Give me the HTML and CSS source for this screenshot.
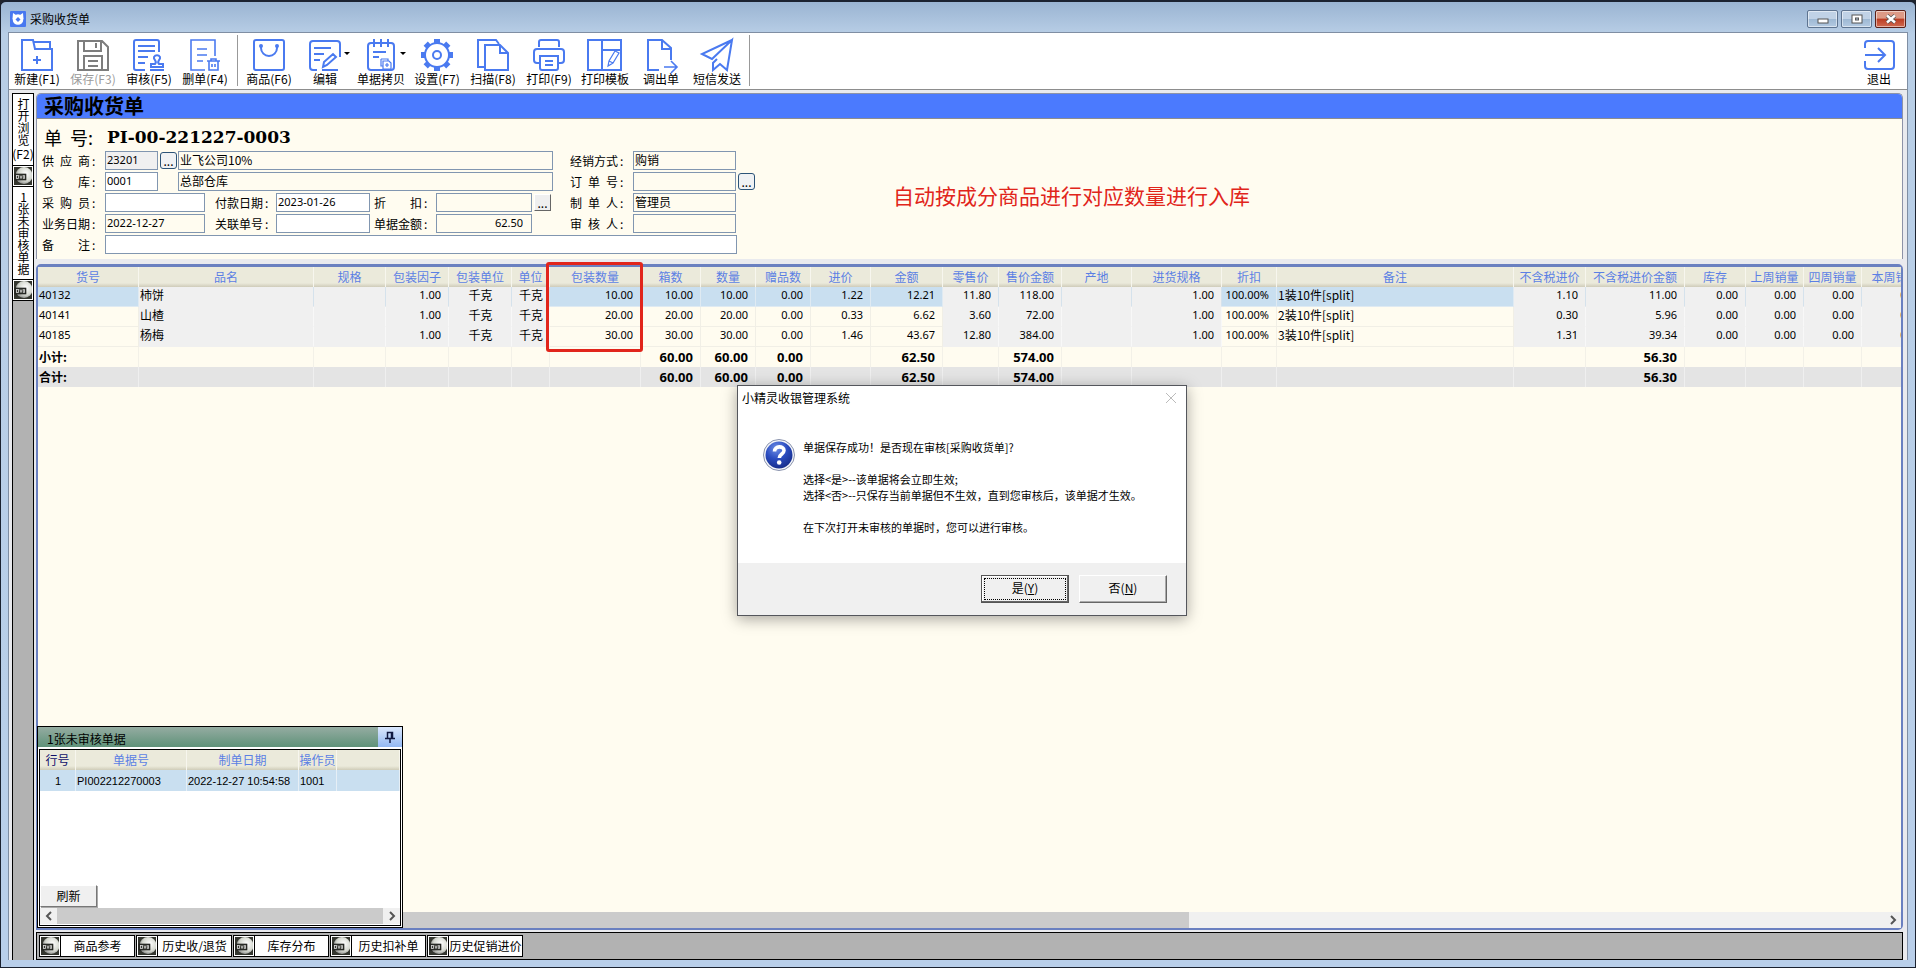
FILE: index.html
```html
<!DOCTYPE html>
<html lang="zh-CN">
<head>
<meta charset="utf-8">
<title>采购收货单</title>
<link rel="stylesheet" href="styles.css">
</head>
<body>
<svg class="defs" aria-hidden="true">
  <defs>
    <radialGradient id="disc" cx=".6" cy=".4" r=".7"><stop offset="0" stop-color="#fff"/><stop offset=".6" stop-color="#d5d8d0"/><stop offset="1" stop-color="#777"/></radialGradient>
    <radialGradient id="ball" cx=".4" cy=".25" r=".8"><stop offset="0" stop-color="#6f8fe6"/><stop offset=".5" stop-color="#2a4cc0"/><stop offset="1" stop-color="#142a86"/></radialGradient>
    <symbol id="dvd" viewBox="0 0 18 18">
      <rect width="18" height="18" fill="#34362f"/>
      <circle cx="10" cy="8.500" r="8.500" fill="url(#disc)"/>
      <rect x="1" y="7" width="11" height="6" fill="#33352f" stroke="#111" stroke-width=".6"/>
      <rect x="2.500" y="8.500" width="2" height="3" fill="none" stroke="#ddd" stroke-width=".8"/>
      <path d="M6 8.500l1 3 1-3M9.300 8.500v3h1.200v-3z" fill="none" stroke="#ddd" stroke-width=".8"/>
    </symbol>
  </defs>
</svg>
<div class="window">
  <header class="titlebar">
    <svg class="app-icon" viewBox="0 0 16 16"><rect width="16" height="16" rx="1" fill="#4878f0"/><path d="M3 2l3 2h4l3-2 .5 6h-11z" fill="#fff"/><circle cx="8" cy="8.500" r="5.300" fill="#fff"/><path d="M8 6l2.500 2.500L8 11 5.500 8.500z" fill="#4878f0"/></svg>
    <span class="caption">采购收货单</span>
    <div class="win-buttons">
      <button class="win-btn" aria-label="最小化"><svg viewBox="0 0 12 10"><rect x="1" y="5" width="10" height="4" fill="#fff" stroke="#555"/></svg></button>
      <button class="win-btn" aria-label="还原"><svg viewBox="0 0 12 10"><rect x="1" y="1" width="10" height="8" fill="#fff" stroke="#555"/><rect x="4.500" y="4" width="3" height="2" fill="#b5cae0" stroke="#555"/></svg></button>
      <button class="win-btn close" aria-label="关闭"><svg viewBox="0 0 12 10"><path d="M2 1.500l8 7M10 1.500l-8 7" stroke="#555" stroke-width="4"/><path d="M2 1.500l8 7M10 1.500l-8 7" stroke="#fff" stroke-width="2.400"/></svg></button>
    </div>
  </header>

  <div class="client">
    <nav class="toolbar">
      <button class="tool"><svg viewBox="0 0 32 32"><path d="M1 31V1h11l2 9h17v21zM12 3h17v7M16 17v8M12 21h8"/></svg>新建(F1)</button>
      <button class="tool" disabled><svg viewBox="0 0 32 32"><path d="M1 2h24l6 6v23H1zM7 2v10h17V2M19 4v5M7 31V17h18v14M11 22h10M11 27h10"/></svg>保存(F3)</button>
      <button class="tool"><svg viewBox="0 0 32 32"><path d="M26 13V3a2 2 0 0 0-2-2H3a2 2 0 0 0-2 2v26a2 2 0 0 0 2 2h9M5 7h17M5 12h17M5 18h10M5 24h7M22 25c3-3-2-4-1-7a3.500 3.500 0 0 1 6 0c1 3-4 4-1 7h4v3H18v-3zM17 31h14"/></svg>审核(F5)</button>
      <button class="tool"><svg class="thin" viewBox="0 0 32 32"><path d="M26 17V1H2v30h14M8 10h10M8 16h10M8 22h6M18 22h13M22 22v-2h5v2M20 22v9h9v-9M23 25v3M26 25v3"/></svg>删单(F4)</button>
      <span class="tool-sep"></span>
      <button class="tool"><svg viewBox="0 0 32 32"><rect x="1" y="1" width="30" height="30" rx="2"/><path d="M8 7v2a8 8 0 0 0 16 0V7"/><circle cx="8" cy="7" r="1"/><circle cx="24" cy="7" r="1"/></svg>商品(F6)</button>
      <button class="tool"><svg viewBox="0 0 32 32"><path d="M31 18V5a3 3 0 0 0-3-3H4a3 3 0 0 0-3 3v23a3 3 0 0 0 3 3h4M5 9h17M5 15h10M5 21h6M14 28l1-5 9-8 3 3-9 8zM13 31h16"/></svg><i class="caret"></i>编辑</button>
      <button class="tool"><svg viewBox="0 0 32 32"><path d="M13 31H6a3 3 0 0 1-3-3V7a3 3 0 0 1 3-3h20a3 3 0 0 1 3 3v21a3 3 0 0 1-3 3H13M9 0v8M16 0v8M23 0v8M8 13h13M8 18h6"/><path class="hair" d="M16 20h7v2M16 20v7h2M18 22h6l2 2v6h-8zM22 24v4M20 26h4"/></svg><i class="caret"></i>单据拷贝</button>
      <button class="tool"><svg viewBox="0 0 32 32"><circle cx="16" cy="16" r="12"/><circle cx="16" cy="16" r="4"/><g class="teeth"><path d="M16 0v4M16 28v4M0 16h4M28 16h4M4.700 4.700l2.800 2.800M24.500 24.500l2.800 2.800M27.300 4.700l-2.800 2.800M7.500 24.500l-2.800 2.800"/></g></svg>设置(F7)</button>
      <button class="tool"><svg viewBox="0 0 32 32"><path d="M9 28H1V1h18l3 4M8 6h15l8 8v17H8zM23 6v8h8"/></svg>扫描(F8)</button>
      <button class="tool"><svg viewBox="0 0 32 32"><path d="M6 8V3a2 2 0 0 1 2-2h16a2 2 0 0 1 2 2v5M7 24H4a3 3 0 0 1-3-3V13a3 3 0 0 1 3-3h24a3 3 0 0 1 3 3v8a3 3 0 0 1-3 3h-3M7 17h18v12a2 2 0 0 1-2 2H9a2 2 0 0 1-2-2zM12 22h8M12 26h8"/></svg>打印(F9)</button>
      <button class="tool"><svg viewBox="0 0 32 32"><path d="M-1 1h33v30H-1zM13 1v30M13 11h19"/><path class="hair" d="M19 27l1-5 6-10 4 2-6 10zM20 22l4 2"/></svg>打印模板</button>
      <button class="tool"><svg viewBox="0 0 32 32"><path d="M14 31H3V1h14l9 8v12M17 1v9h9"/><path class="thin" d="M19 28h13M26 22l6 6-6 6"/></svg>调出单</button>
      <button class="tool"><svg viewBox="0 0 32 32"><path d="M31 1L1 15l10 5L31 1l-5 30-7-6-7 6v-7l4-4"/></svg>短信发送</button>
      <span class="tool-sep"></span>
      <button class="tool exit"><svg viewBox="0 0 32 32"><path d="M2 9V5a3 3 0 0 1 3-3h23a3 3 0 0 1 3 3v22a3 3 0 0 1-3 3H5a3 3 0 0 1-3-3v-5M2 16h20M15 9l7 7-7 7"/></svg>退出</button>
    </nav>

    <div class="workspace">
      <aside class="sidebar">
        <button class="side-tab first"><span class="vert">打开浏览</span><span>(F2)</span></button>
        <span class="side-icon"><svg><use href="#dvd"/></svg></span>
        <button class="side-tab second"><span class="vert">1张未审核单据</span></button>
        <span class="side-icon"><svg><use href="#dvd"/></svg></span>
      </aside>

      <main class="main">
        <section class="form-panel">
          <h1 class="form-title">采购收货单</h1>
          <div class="form-area">
            <div class="form">
              <p class="doc-no"><span>单&nbsp; 号:</span><b>PI-00-221227-0003</b></p>
              <div class="form-cols">
                <div class="col-left">
                  <div class="row"><label for="supplier"><span>供 应 商</span>:</label><input id="supplier" class="w-code gray" value="23201"><button class="dots rounded low">...</button><input class="grow tint" aria-label="供应商名称" value="业飞公司10%"></div>
                  <div class="row"><label for="store"><span>仓 库</span>:</label><input id="store" class="w-code" value="0001"><span class="dots-gap"></span><input class="grow tint" aria-label="仓库名称" value="总部仓库"></div>
                  <div class="row"><label for="buyer"><span>采 购 员</span>:</label><input id="buyer" class="w-100"><label for="paydate" class="mid"><span>付款日期</span>:</label><input id="paydate" class="w-94" value="2023-01-26"><label for="disc-in" class="mid tight"><span>折 扣</span>:</label><input id="disc-in" class="w-96 tint"><button class="dots raised">...</button></div>
                  <div class="row"><label for="bizdate"><span>业务日期</span>:</label><input id="bizdate" class="w-100 tint" value="2022-12-27"><label for="rel" class="mid"><span>关联单号</span>:</label><input id="rel" class="w-94"><label for="amount" class="mid tight"><span>单据金额</span>:</label><input id="amount" class="w-96 tint num" value="62.50"></div>
                </div>
                <div class="col-right">
                  <div class="row"><label for="mode"><span>经销方式</span>:</label><input id="mode" class="w-103 tint" value="购销"></div>
                  <div class="row"><label for="order"><span>订 单 号</span>:</label><input id="order" class="w-103 tint"><button class="dots rounded">...</button></div>
                  <div class="row"><label for="maker"><span>制 单 人</span>:</label><input id="maker" class="w-103 tint" value="管理员"></div>
                  <div class="row"><label for="auditor"><span>审 核 人</span>:</label><input id="auditor" class="w-103 tint"></div>
                </div>
              </div>
              <div class="row remark"><label for="remark"><span>备 注</span>:</label><input id="remark" class="grow"></div>
            </div>
            <p class="annotation">自动按成分商品进行对应数量进行入库</p>
          </div>
        </section>

        <section class="grid-panel">
          <div class="grid-clip">
            <table class="grid">
              <colgroup><col class="c101"><col class="c175"><col class="c72"><col class="c63"><col class="c63"><col class="c38"><col class="c91"><col class="c60"><col class="c55"><col class="c55"><col class="c60"><col class="c72"><col class="c56"><col class="c63"><col class="c70"><col class="c90"><col class="c55"><col class="c237"><col class="c72"><col class="c99"><col class="c61"><col class="c58"><col class="c58"><col class="c68"></colgroup>
              <thead><tr><th>货号</th><th>品名</th><th>规格</th><th>包装因子</th><th>包装单位</th><th>单位</th><th>包装数量</th><th>箱数</th><th>数量</th><th>赠品数</th><th>进价</th><th>金额</th><th>零售价</th><th>售价金额</th><th>产地</th><th>进货规格</th><th>折扣</th><th>备注</th><th>不含税进价</th><th>不含税进价金额</th><th>库存</th><th>上周销量</th><th>四周销量</th><th>本周销量</th></tr></thead>
              <tbody>
                <tr class="sel"><td class="e n">40132</td><td>柿饼</td><td></td><td class="r">1.00</td><td class="c">千克</td><td class="c">千克</td><td class="e r">10.00</td><td class="e r">10.00</td><td class="e r">10.00</td><td class="e r">0.00</td><td class="e r">1.22</td><td class="e r">12.21</td><td class="r">11.80</td><td class="r">118.00</td><td></td><td class="r">1.00</td><td class="e r">100.00%</td><td class="e">1装10件[split]</td><td class="r">1.10</td><td class="r">11.00</td><td class="r">0.00</td><td class="r">0.00</td><td class="r">0.00</td><td class="r">0.00</td></tr>
                <tr><td class="e n">40141</td><td>山楂</td><td></td><td class="r">1.00</td><td class="c">千克</td><td class="c">千克</td><td class="e r">20.00</td><td class="e r">20.00</td><td class="e r">20.00</td><td class="e r">0.00</td><td class="e r">0.33</td><td class="e r">6.62</td><td class="r">3.60</td><td class="r">72.00</td><td></td><td class="r">1.00</td><td class="e r">100.00%</td><td class="e">2装10件[split]</td><td class="r">0.30</td><td class="r">5.96</td><td class="r">0.00</td><td class="r">0.00</td><td class="r">0.00</td><td class="r">0.00</td></tr>
                <tr><td class="e n">40185</td><td>杨梅</td><td></td><td class="r">1.00</td><td class="c">千克</td><td class="c">千克</td><td class="e r">30.00</td><td class="e r">30.00</td><td class="e r">30.00</td><td class="e r">0.00</td><td class="e r">1.46</td><td class="e r">43.67</td><td class="r">12.80</td><td class="r">384.00</td><td></td><td class="r">1.00</td><td class="e r">100.00%</td><td class="e">3装10件[split]</td><td class="r">1.31</td><td class="r">39.34</td><td class="r">0.00</td><td class="r">0.00</td><td class="r">0.00</td><td class="r">0.00</td></tr>
              </tbody>
              <tfoot>
                <tr class="sub"><td>小计:</td><td></td><td></td><td></td><td></td><td></td><td></td><td class="r">60.00</td><td class="r">60.00</td><td class="r">0.00</td><td></td><td class="r">62.50</td><td></td><td class="r">574.00</td><td></td><td></td><td></td><td></td><td></td><td class="r">56.30</td><td></td><td></td><td></td><td></td></tr>
                <tr class="total"><td>合计:</td><td></td><td></td><td></td><td></td><td></td><td></td><td class="r">60.00</td><td class="r">60.00</td><td class="r">0.00</td><td></td><td class="r">62.50</td><td></td><td class="r">574.00</td><td></td><td></td><td></td><td></td><td></td><td class="r">56.30</td><td></td><td></td><td></td><td></td></tr>
              </tfoot>
            </table>
          </div>
          <div class="hscroll"><span class="arrow"><svg viewBox="0 0 8 10"><path d="M6 1L2 5l4 4"/></svg></span><div class="track"><div class="thumb"></div></div><span class="arrow"><svg viewBox="0 0 8 10"><path d="M2 1l4 4-4 4"/></svg></span></div>
          <div class="highlight"></div>

          <section class="popup">
            <header class="popup-head"><span>1张未审核单据</span><button class="pin" aria-label="固定"><svg viewBox="0 0 10 12"><path d="M2.500 1.500h5v6h-5zM6.500 1.500v6M0 7.500h10M5 7.500V12" fill="none" stroke="#101840" stroke-width="1.500"/></svg></button></header>
            <div class="popup-body">
              <table class="mini">
                <colgroup><col class="c36"><col class="c111"><col class="c112"><col class="c38"><col></colgroup>
                <thead><tr><th class="dark">行号</th><th>单据号</th><th>制单日期</th><th>操作员</th><th></th></tr></thead>
                <tbody><tr><td class="c">1</td><td>PI002212270003</td><td>2022-12-27 10:54:58</td><td>1001</td><td></td></tr></tbody>
              </table>
              <div class="popup-foot">
                <button class="refresh">刷新</button>
                <div class="hscroll"><span class="arrow"><svg viewBox="0 0 8 10"><path d="M6 1L2 5l4 4"/></svg></span><div class="track"><div class="thumb full"></div></div><span class="arrow"><svg viewBox="0 0 8 10"><path d="M2 1l4 4-4 4"/></svg></span></div>
              </div>
            </div>
          </section>
        </section>

        <nav class="tabs">
          <div class="tab"><svg><use href="#dvd"/></svg><button>商品参考</button></div>
          <div class="tab"><svg><use href="#dvd"/></svg><button>历史收/退货</button></div>
          <div class="tab"><svg><use href="#dvd"/></svg><button>库存分布</button></div>
          <div class="tab"><svg><use href="#dvd"/></svg><button>历史扣补单</button></div>
          <div class="tab"><svg><use href="#dvd"/></svg><button>历史促销进价</button></div>
        </nav>
      </main>
    </div>
  </div>
</div>

<div class="dialog" role="dialog" aria-labelledby="dlg-title">
  <header class="dlg-head"><span id="dlg-title">小精灵收银管理系统</span><button class="dlg-close" aria-label="关闭"><svg viewBox="0 0 10 10"><path d="M0 0l10 10M10 0L0 10" stroke="#bbb"/></svg></button></header>
  <div class="dlg-body">
    <svg class="question" viewBox="0 0 32 32"><circle cx="16" cy="16" r="15.500" fill="#f4f6fa" stroke="#8a93ad"/><circle cx="16" cy="16" r="13.500" fill="url(#ball)"/><path d="M11.500 12.500c0-6 9.500-6 9.500-1 0 3.500-4.700 3.500-4.700 7.500" fill="none" stroke="#fff" stroke-width="3.600"/><circle cx="16.200" cy="23.500" r="2.300" fill="#fff"/></svg>
    <div class="dlg-text">
      <p>单据保存成功！是否现在审核[采购收货单]?</p>
      <p>选择&lt;是&gt;--该单据将会立即生效;<br>选择&lt;否&gt;--只保存当前单据但不生效，直到您审核后，该单据才生效。</p>
      <p>在下次打开未审核的单据时，您可以进行审核。</p>
    </div>
  </div>
  <footer class="dlg-foot"><button class="dlg-btn default"><span>是(<u>Y</u>)</span></button><button class="dlg-btn"><span>否(<u>N</u>)</span></button></footer>
</div>
</body>
</html>
```

FILE: styles.css
```css
* { box-sizing: border-box; }

body {
  margin: 0;
  height: 100vh;
  overflow: hidden;
  font: 12px/16px "Noto Sans CJK SC", sans-serif;
  color: #000;
  background: #20242c;
}

h1, p { margin: 0; }
button, input { font: inherit; color: inherit; margin: 0; padding: 0; }
button { border: 0; background: none; }
svg { display: block; flex: none; overflow: visible; }
.defs { position: absolute; width: 0; height: 0; }

/* Window frame */
.window {
  height: 100%;
  display: flex;
  flex-direction: column;
  padding: 0 7px 7px 7px;
  background: linear-gradient(#9ab4d2, #b8cee6 32px, #b9cfea);
  border: 1px solid #1b2230;
  border-top-width: 2px;
  border-radius: 6px 6px 0 0;
}

.titlebar {
  flex: none;
  height: 30px;
  display: flex;
  align-items: center;
  gap: 4px;
  padding: 4px 0 0 2px;
}
.app-icon { width: 16px; height: 16px; }
.caption { flex: 1; }
.win-buttons { display: flex; gap: 3px; padding-right: 2px; }
.win-btn {
  width: 31px;
  height: 18px;
  display: flex;
  align-items: center;
  justify-content: center;
  border: 1px solid #5e7490;
  border-radius: 2px;
  box-shadow: inset 0 0 0 1px rgba(255, 255, 255, .5);
  background: linear-gradient(#c0d2e6 50%, #9db8d3 50%, #b4cae2);
}
.win-btn svg { width: 12px; height: 10px; }
.win-btn.close { background: linear-gradient(#dd9a86 45%, #bb3c22 50%, #d06a50); border-color: #5a2018; }

.client {
  flex: 1;
  min-height: 0;
  display: flex;
  flex-direction: column;
  background: #e9eaee;
  border: 1px solid #7f8ea3;
  border-bottom: 0;
}

/* Toolbar */
.toolbar {
  flex: none;
  height: 57px;
  display: flex;
  background: #fff;
  border-bottom: 1px solid #8d8d8d;
}
.tool {
  position: relative;
  width: 56px;
  padding-top: 6px;
  display: flex;
  flex-direction: column;
  align-items: center;
  white-space: nowrap;
}
.tool svg {
  width: 32px;
  height: 32px;
  fill: none;
  stroke: #4a7af0;
  stroke-width: 2;
}
.tool:disabled { color: #9b9b9b; }
.tool:disabled svg { stroke: #7d7d7d; }
.tool svg.thin, .tool .thin { stroke-width: 1.6; }
.tool .hair { stroke-width: 1.2; }
.tool .teeth { stroke-width: 6; }
.caret {
  position: absolute;
  right: 3px;
  top: 19px;
  border: 3px solid transparent;
  border-top-color: #000;
  border-bottom: 0;
}
.tool-sep { width: 1px; margin: 2px 3px 3px 4px; background: #999; }
.exit { margin-left: auto; }

/* Work area */
.workspace { flex: 1; min-height: 0; display: flex; padding: 3px 4px 0 3px; }

.sidebar {
  flex: none;
  width: 22px;
  display: flex;
  flex-direction: column;
  border: 1px solid #000;
  border-bottom: 0;
  background: #b2b2b2;
}
.side-tab {
  display: flex;
  flex-direction: column;
  align-items: center;
  justify-content: center;
  background: #fff;
  border-bottom: 1px solid #000;
  line-height: 16px;
}
.side-tab.first { height: 72px; }
.side-tab.second { height: 93px; }
.vert { writing-mode: vertical-rl; text-orientation: upright; }
.side-icon {
  height: 21px;
  display: flex;
  align-items: center;
  justify-content: center;
  background: #fff;
  border-bottom: 1px solid #000;
}
.side-icon svg { width: 18px; height: 18px; }

.main { flex: 1; min-width: 0; display: flex; flex-direction: column; padding-left: 2px; }

/* Form */
.form-panel {
  border: 1px solid #8d93a8;
  border-bottom: 0;
  border-radius: 5px 5px 0 0;
  background: #fffcf0;
  overflow: hidden;
}
.form-title {
  padding-left: 7px;
  font-size: 20px;
  line-height: 24px;
  background: #4b7afe;
  border-bottom: 1px solid #8d8d8d;
}
.form-area { display: flex; padding: 3px 0 5px 5px; }
.form { flex: none; width: 695px; }
.doc-no { display: flex; align-items: center; height: 29px; gap: 9px; padding-left: 2px; font-size: 18px; }
.doc-no span { width: 54px; white-space: nowrap; }
.doc-no b { font-family: "DejaVu Serif", serif; font-size: 17px; }
.form-cols { display: flex; gap: 17px; }
.col-left { flex: none; width: 511px; }
.col-left, .col-right { display: flex; flex-direction: column; gap: 2px; }
.row { display: flex; align-items: center; height: 19px; }
.row.remark { margin-top: 2px; }
.row label { flex: none; display: flex; width: 63px; gap: 2px; }
.row label span { width: 48px; text-align: justify; text-align-last: justify; }
.row label.mid { width: 71px; padding-left: 10px; }
.row label.tight { width: 66px; padding-left: 4px; }
.row input {
  min-width: 0;
  height: 19px;
  padding: 0 1px 2px;
  border: 1px solid #8196b0;
  border-radius: 0;
  background: #fff;
  font-family: "Noto Sans", "Noto Sans CJK SC", sans-serif;
  font-size: 11px;
}
.row input.tint { background: #fffcf0; font-family: "Noto Sans CJK SC", sans-serif; font-size: 12px; }
.row input#bizdate, .row input.num { font-family: "Noto Sans", sans-serif; font-size: 11px; }
.row input.gray { background: #f0f0f0; }
.row input.num { text-align: right; padding-right: 8px; }
.row .w-code { width: 53px; }
.row .w-100 { width: 100px; }
.row .w-94 { width: 94px; }
.row .w-96 { width: 96px; }
.row .w-103 { flex: none; width: 103px; }
.grow { flex: 1; }
.dots-gap { width: 20px; }
.dots {
  flex: none;
  width: 17px;
  height: 17px;
  margin: 0 1px 0 2px;
  display: flex;
  align-items: flex-end;
  justify-content: center;
  line-height: 14px;
  background: #f0f2f4;
}
.dots.rounded { border: 1px solid #2c5478; border-radius: 3px; }
.dots.raised { border: 1px solid; border-color: #fff #666 #666 #fff; margin-right: 0; background: #efefef; }
.annotation { margin: 58px auto auto 156px; font-size: 21px; line-height: 30px; color: #e1251b; white-space: nowrap; }

/* Goods grid */
.grid-panel {
  position: relative;
  flex: 1;
  min-height: 0;
  margin-top: 5px;
  display: flex;
  flex-direction: column;
  border: 2px solid #6a80c0;
  border-top-width: 3px;
  border-radius: 5px 5px 5px 0;
  background: #fffcf0;
}
.grid-clip { flex: 1; min-height: 0; overflow: hidden; }
table { table-layout: fixed; border-collapse: separate; border-spacing: 0; }
.grid { width: 1892px; }
.c36 { width: 36px; } .c38 { width: 38px; } .c55 { width: 55px; } .c56 { width: 56px; }
.c58 { width: 58px; } .c60 { width: 60px; } .c61 { width: 61px; } .c63 { width: 63px; }
.c68 { width: 68px; } .c70 { width: 70px; } .c72 { width: 72px; } .c90 { width: 90px; }
.c91 { width: 91px; } .c99 { width: 99px; } .c101 { width: 101px; } .c111 { width: 111px; }
.c112 { width: 112px; } .c175 { width: 175px; } .c237 { width: 237px; }

th {
  height: 20px;
  padding: 0;
  font-weight: 400;
  line-height: 18px;
  white-space: nowrap;
  color: #5b7fe4;
  background: linear-gradient(#ebeadb 80%, #cfccb9);
  border-right: 1px solid #f7f6ee;
}
td { white-space: nowrap; padding: 0 0 0 1px; }
.grid tbody td {
  height: 20px;
  padding-bottom: 4px;
  line-height: 15px;
  background: #f0f0f0;
  border-right: 1px solid #f8f8f8;
  border-bottom: 1px solid #f0f0f0;
}
.grid tbody td.e { background: #fffcf0; border-color: #f1efe6; }
.grid tbody .sel td.e { background: #c9dff0; border-color: #dfeaf2; }
.grid tbody .sel td { border-right-color: #d5e2ec; }
.grid tbody td.r, .grid tbody td.n { font-family: "Noto Sans", sans-serif; font-size: 11px; }
.grid td.r { text-align: right; padding-right: 7px; }
td.c { text-align: center; }
.grid tfoot td { height: 20px; font-weight: 700; line-height: 18px; border-right: 1px solid #f3f1e8; }
.grid tfoot td.r { font-family: "Noto Sans", sans-serif; font-size: 13px; }
.grid .total td { background: #e4e4e4; border-color: #efefef; }

.highlight {
  position: absolute;
  left: 508px;
  top: -5px;
  width: 97px;
  height: 90px;
  border: 3px solid #e1251b;
  border-radius: 3px;
}

.hscroll { flex: none; display: flex; height: 16px; background: #f0f0f0; }
.arrow { width: 17px; display: flex; align-items: center; justify-content: center; }
.arrow svg { width: 8px; height: 10px; fill: none; stroke: #555; stroke-width: 2; }
.track { flex: 1; }
.thumb { width: 62%; height: 100%; background: #cbcbcb; }
.thumb.full { width: 100%; }

/* Unaudited documents popup */
.popup {
  position: absolute;
  left: -1px;
  bottom: 0;
  width: 366px;
  height: 202px;
  display: flex;
  flex-direction: column;
  padding: 0 1px 1px;
  border: 1px solid #000;
  background: #fff;
}
.popup-head {
  flex: none;
  height: 20px;
  margin: 0 -1px;
  display: flex;
  justify-content: space-between;
  padding-left: 9px;
  line-height: 23px;
  background: linear-gradient(#95aca2, #5f9279);
}
.pin { width: 24px; display: flex; align-items: center; justify-content: center; background: linear-gradient(#dbe8fd, #93b8f2); }
.pin svg { width: 10px; height: 12px; }
.popup-body { flex: 1; margin-top: 2px; display: flex; flex-direction: column; border: 1px solid #000; }
.mini { width: 100%; }
.mini th.dark { color: #10106a; }
.mini td {
  height: 21px;
  font: 11px "Liberation Sans", sans-serif;
  background: #c9dff0;
  border-right: 1px solid #e6eff6;
}
.popup-foot { margin-top: auto; padding-bottom: 1px; }
.refresh {
  width: 57px;
  height: 22px;
  display: block;
  background: #f0f0f0;
  border: 1px solid;
  border-color: #fff #777 #777 #fff;
  box-shadow: 1px 1px 0 #aaa;
  margin-bottom: 1px;
}

/* Bottom tabs */
.tabs {
  flex: none;
  height: 28px;
  margin-top: 2px;
  display: flex;
  align-items: center;
  gap: 1px;
  padding-left: 2px;
  border: 1px solid #000;
  background: #b2b2b2;
}
.tab { display: flex; align-items: center; width: 96px; height: 22px; border: 1px solid #000; background: #fff; }
.tab svg { width: 18px; height: 18px; margin: 0 1px; }
.tab button { flex: 1; height: 20px; border-left: 1px solid #000; white-space: nowrap; }

/* Message box */
.dialog {
  position: absolute;
  left: 737px;
  top: 385px;
  width: 450px;
  border: 1px solid #54565c;
  background: #fff;
  box-shadow: 0 3px 14px rgba(0, 0, 0, .35);
}
.dlg-head { display: flex; justify-content: space-between; align-items: center; padding: 4px 10px 0 4px; }
.dlg-close svg { width: 10px; height: 10px; }
.dlg-body { display: flex; gap: 8px; padding: 33px 24px 28px 25px; font-size: 11px; }
.question { width: 32px; height: 32px; }
.dlg-text { display: flex; flex-direction: column; gap: 16px; }
.dlg-text p { white-space: nowrap; }
.dlg-foot { display: flex; justify-content: flex-end; gap: 10px; padding: 12px 19px 12px; background: #f0f0f0; }
.dlg-btn {
  width: 88px;
  height: 28px;
  padding: 2px;
  background: #f0f0f0;
  border: 1px solid;
  border-color: #fff #666 #666 #fff;
  box-shadow: inset -1px -1px 0 #aaa;
}
.dlg-btn.default { border-color: #555; box-shadow: inset -1px -1px 0 #666, inset 1px 1px 0 #fff; }
.dlg-btn span { display: block; height: 22px; line-height: 20px; }
.dlg-btn.default span { border: 1px dotted #000; line-height: 18px; }
```
